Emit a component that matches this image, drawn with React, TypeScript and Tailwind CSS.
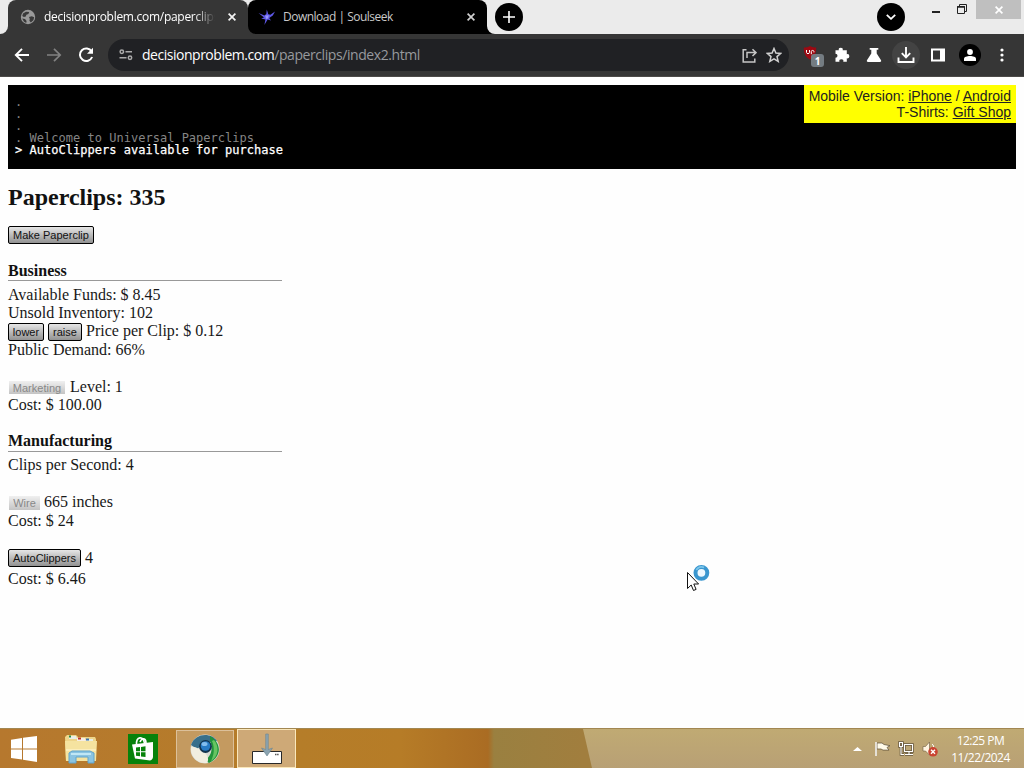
import React from "react";

const UI = "font-['Open_Sans','Noto_Sans',sans-serif]";
const ARIAL = "font-['Liberation_Sans',Arial,sans-serif]";

function Globe() {
  return (
    <svg className="h-4 w-4 shrink-0" viewBox="0 0 16 16">
      <circle cx="8" cy="8" r="7.2" fill="#9a9a9a" />
      <path d="M3 4.5 6 2.8l3.2.2-.8 2-2 .8-.6 1.7-2 .4-1.5-1zM9 8l2.8-.8 2.4 1-.8 3-2.6 2.4-1.4-1.8.4-1.8zM2.2 9.5 5 10l1.6 2-.4 2-2.4-1.5z" fill="#3a3a3a" />
    </svg>
  );
}

function Bird() {
  return (
    <svg className="h-[18px] w-[18px] shrink-0" viewBox="0 0 18 18">
      <path d="M.5 5 6.4 7.4 8.3 6 8.8 1.5 10.3 6.3 12.4 6.8 17 3.6 14.8 7.6 11.2 10 13 12.6 9.6 11.6 6.4 17 7.4 11.6 3.2 10.4 6 9.4z" fill="#5d57e6" />
      <path d="M7.2 7.4 10.8 7.2 10 10.6 8 11z" fill="#9896fa" />
    </svg>
  );
}

function Close({ color }: { color: string }) {
  return (
    <svg className="h-2 w-2 shrink-0" viewBox="0 0 8 8" stroke={color} strokeWidth="1.7">
      <path d="m.6.6 6.8 6.8M7.4.6.6 7.4" />
    </svg>
  );
}

function TabStrip() {
  return (
    <div className={`flex h-[34px] bg-[#ebebeb] text-xs ${UI}`}>
      <div className="w-2 bg-[#363636]">
        <div className="h-full w-full rounded-br-lg bg-[#ebebeb]" />
      </div>
      <div className="flex h-full w-60 items-center rounded-t-lg bg-[#363636] pl-3">
        <Globe />
        <div className="ml-2 w-[171px] overflow-hidden whitespace-nowrap tracking-[-0.28px] text-white [mask-image:linear-gradient(to_right,black_88%,transparent)]">
          decisionproblem.com/paperclips
        </div>
        <div className="ml-[13px]"><Close color="#f4f4f4" /></div>
      </div>
      <div className="w-[239px] bg-[#363636]">
        <div className="h-full bg-[linear-gradient(#ebebeb_0_8px,#363636_8px)]">
          <div className="flex h-full items-center rounded-lg rounded-br-none bg-black pl-[10px]">
            <Bird />
            <div className="ml-[7px] w-[176px] whitespace-nowrap tracking-[-0.5px] text-[#c9c9c9]">Download | Soulseek</div>
            <div className="ml-[8px]"><Close color="#d0d0d0" /></div>
          </div>
        </div>
      </div>
      <div className="w-2 bg-black">
        <div className="h-full rounded-bl-lg bg-[#ebebeb]" />
      </div>
      <div className="mt-[3px] flex h-7 w-7 items-center justify-center rounded-full bg-black">
        <svg className="h-3 w-3" viewBox="0 0 12 12" stroke="#fff" strokeWidth="1.6"><path d="M6 0v12M0 6h12" /></svg>
      </div>
      <div className="ml-auto mt-[3px] flex h-7 w-7 items-center justify-center rounded-full bg-black">
        <svg className="h-[6px] w-[10px]" viewBox="0 0 10 6" fill="none" stroke="#fff" strokeWidth="1.8"><path d="m.8.8 4.2 4 4.2-4" /></svg>
      </div>
      <div className="ml-[27px] mt-[11px] h-[2px] w-2 bg-[#222]" />
      <svg className="ml-[17px] mt-1 h-[10px] w-[10px]" viewBox="0 0 10 10" fill="none" stroke="#222">
        <path d="M2.5 2.5v-2h7v7h-2M.5 2.5h7v7h-7z" />
        <path d="M0 3h8" strokeWidth="1.5" />
      </svg>
      <div className="ml-[9px] mr-[3px] flex h-[19px] w-[45px] items-center justify-center bg-[#bfbfbf]">
        <Close color="#fff" />
      </div>
    </div>
  );
}

function Toolbar() {
  return (
    <div className={`flex h-[43px] items-center border-b border-[#4c4a48] bg-[#363636] ${UI}`}>
      <svg className="ml-[14px] h-4 w-4" viewBox="0 0 16 16" fill="none" stroke="#fff" strokeWidth="1.9"><path d="M15 8H2M8 1.8 1.8 8 8 14.2" /></svg>
      <svg className="ml-4 h-4 w-4" viewBox="0 0 16 16" fill="none" stroke="#828282" strokeWidth="1.7"><path d="M1 8h13M8 1.8 14.2 8 8 14.2" /></svg>
      <svg className="ml-4 h-4 w-4" viewBox="0 0 16 16">
        <path d="M13.6 4.4A6.3 6.3 0 1 0 14.1 10" fill="none" stroke="#fff" strokeWidth="2" />
        <path d="M15 .8v6H9z" fill="#fff" />
      </svg>
      <div className="ml-[14px] flex h-8 w-[681px] items-center rounded-full bg-[#202124]">
        <svg className="ml-[11px] h-3 w-[14px]" viewBox="0 0 14 12" fill="none" stroke="#aaa" strokeWidth="1.5">
          <circle cx="2.8" cy="2.7" r="1.7" /><path d="M6.5 2.7H13M.5 8.8h7" /><circle cx="11" cy="8.8" r="1.7" />
        </svg>
        <div className="ml-[9px] w-[600px] whitespace-nowrap text-sm">
          <span className="tracking-[-0.48px] text-white">decisionproblem.com</span>
          <span className="tracking-[-0.42px] text-[#97999d]">/paperclips/index2.html</span>
        </div>
        <svg className="h-[15px] w-[15px]" viewBox="0 0 15 15" fill="none" stroke="#c5c5c5" strokeWidth="1.5">
          <path d="M4.5 1.8H1.2V14h11.6v-3.5M5 10V4.6h8.5M10.5 1.2 14 4.6 10.5 8" />
        </svg>
        <svg className="ml-[9px] h-4 w-4" viewBox="0 0 16 16" fill="none" stroke="#d0d0d0" strokeWidth="1.5">
          <path d="m8 1.5 1.9 4.5 4.8.4-3.7 3.2 1.2 4.8L8 11.9l-4.2 2.5L5 9.6 1.3 6.4 6.1 6z" />
        </svg>
      </div>
      <div className="relative ml-[13px] h-5 w-[22px]">
        <svg className="h-4 w-4" viewBox="0 0 16 16"><path d="M8 1c2 1.3 4 1.5 6.2 1.5 0 5.5-1.3 9.3-6.2 12-4.9-2.7-6.2-6.5-6.2-12C4 2.5 6 2.3 8 1" fill="#9c0912" /><path d="M4.5 5v2.5c0 1.5 3 1.5 3 0V5M9.3 9.2V6.4c0-1.3 2.6-1.3 2.6 0v1" fill="none" stroke="#fff" strokeWidth="1" /></svg>
        <div className="absolute left-[9px] top-[9px] flex h-[13px] w-[13px] items-center justify-center rounded-[3px] bg-[#747c82] text-[10px] font-bold leading-none text-white">1</div>
      </div>
      <svg className="ml-[10px] h-4 w-4" viewBox="0 0 16 16"><path d="M1.5 3.2h3.3a2 2 0 1 1 3.9 0h4.1v4a2.1 2.1 0 1 1 0 4.1v3.5H9.3a2 2 0 1 0-3.9 0H1.5v-4a2 2 0 1 0 0-4z" fill="#fff" /></svg>
      <svg className="ml-4 h-4 w-4" viewBox="0 0 16 16"><path d="M3.7 1h8.6v1.7h-1.6v3.8l4.2 6.5c.7 1.1.1 2-1 2H2.1c-1.1 0-1.7-.9-1-2l4.2-6.5V2.7H3.7z" fill="#fff" /></svg>
      <div className="ml-[10px] flex h-7 w-7 items-center justify-center rounded-full bg-[#434343]">
        <svg className="h-[18px] w-[18px]" viewBox="0 0 18 18" fill="none" stroke="#fff" strokeWidth="1.9"><path d="M9 1v10M4.8 7.2 9 11.4l4.2-4.2M1.5 11.5V16h15v-4.5" /></svg>
      </div>
      <svg className="ml-[11px] h-[14px] w-[14px]" viewBox="0 0 14 14"><path d="M0 .5h14v13H0zm2 2v9h7v-9z" fillRule="evenodd" fill="#fff" /></svg>
      <div className="ml-[14px] flex h-[22px] w-[22px] items-center justify-center rounded-full bg-black">
        <svg className="h-3 w-3" viewBox="0 0 12 12" fill="#fff"><circle cx="6" cy="3" r="2.9" /><path d="M0 12V9.8C0 8 3 7 6 7s6 1 6 2.8V12z" /></svg>
      </div>
      <svg className="ml-[19px] h-[14px] w-1" viewBox="0 0 4 14" fill="#fff"><circle cx="2" cy="2" r="1.6" /><circle cx="2" cy="7" r="1.6" /><circle cx="2" cy="12" r="1.6" /></svg>
    </div>
  );
}

function GameButton({ children, className }: { children: string; className: string }) {
  return (
    <button className={`shrink-0 whitespace-nowrap rounded-[2px] border border-black bg-gradient-to-b from-[#e6e6e6] to-[#929292] text-center text-[11px] leading-[15px] text-[#111] ${ARIAL} ${className}`}>
      {children}
    </button>
  );
}

function DisabledButton({ children, className }: { children: string; className: string }) {
  return (
    <button disabled className={`ml-px shrink-0 whitespace-nowrap bg-gradient-to-b from-[#f0f0f0] to-[#c4c4c4] text-center text-[11px] text-[#888] ${ARIAL} ${className}`}>
      {children}
    </button>
  );
}

function ConsoleLog() {
  return (
    <div className="relative mx-2 mt-2 h-[84px] bg-black pl-[7px] pt-[11px] font-['DejaVu_Sans_Mono',monospace] text-xs leading-3 tracking-[0.02px] text-[#858585]">
      <div>.</div>
      <div>.</div>
      <div>.</div>
      <div>. Welcome to Universal Paperclips</div>
      <div className="text-white [-webkit-text-stroke:0.25px_white]">&gt; AutoClippers available for purchase</div>
      <div className={`absolute right-0 top-0 h-[38px] w-[212px] bg-[#ff0] pr-[5px] pt-[3px] text-right text-[14px] leading-4 tracking-normal text-[#222] ${ARIAL}`}>
        <div className="whitespace-nowrap">Mobile Version: <a className="underline">iPhone</a> / <a className="underline">Android</a></div>
        <div>T-Shirts: <a className="underline">Gift Shop</a></div>
      </div>
    </div>
  );
}

function Game() {
  return (
    <main className="flex h-[559px] flex-col items-start pl-2 text-base leading-[18px] text-[#181818]">
      <h1 className="mt-[14px] h-7 text-2xl font-bold leading-7 text-[#111]">Paperclips: 335</h1>
      <GameButton className="mt-[15px] h-[18px] w-[86px]">Make Paperclip</GameButton>

      <h2 className="mt-[18px] h-[19px] w-[274px] border-b border-[#999] text-[16px] font-bold leading-[18px] text-[#111]">Business</h2>
      <div className="mt-[5px]">Available Funds: $ 8.45</div>
      <div>Unsold Inventory: 102</div>
      <div className="flex h-[19px]">
        <GameButton className="mt-px h-[18px] w-9">lower</GameButton>
        <GameButton className="ml-1 mt-px h-[18px] w-[34px]">raise</GameButton>
        <span className="ml-1">Price per Clip: $ 0.12</span>
      </div>
      <div>Public Demand: 66%</div>
      <div className="mt-[19px] flex">
        <DisabledButton className="mt-[3px] h-[13px] w-14 leading-[12px]">Marketing</DisabledButton>
        <span className="ml-[5px]">Level: 1</span>
      </div>
      <div>Cost: $ 100.00</div>

      <h2 className="mt-[18px] h-5 w-[274px] border-b border-[#999] text-[16px] font-bold leading-[18px] text-[#111]">Manufacturing</h2>
      <div className="mt-1">Clips per Second: 4</div>
      <div className="mt-[19px] flex h-[19px]">
        <DisabledButton className="mt-[3px] h-[14px] w-[31px] leading-[13px]">Wire</DisabledButton>
        <span className="ml-1">665 inches</span>
      </div>
      <div>Cost: $ 24</div>
      <div className="mt-[19px] flex h-[21px]">
        <GameButton className="h-[18px] w-[73px]">AutoClippers</GameButton>
        <span className="ml-1">4</span>
      </div>
      <div>Cost: $ 6.46</div>
    </main>
  );
}

function Pointer() {
  return (
    <svg className="absolute left-[686px] top-[563px] h-[30px] w-[26px]" viewBox="0 0 26 30">
      <circle cx="15.4" cy="9.8" r="5.9" fill="#eef8ff" stroke="#3a96cf" strokeWidth="4" />
      <path d="M10.3 7a5.8 5.8 0 0 1 7.8-2.5" fill="none" stroke="#7cc6ea" strokeWidth="1.7" />
      <path d="M1.5 9.5v16l3.7-3.5 2.3 5.5 2.6-1.1L7.8 21h4.8z" fill="#fff" stroke="#111" strokeWidth="1" />
    </svg>
  );
}

function Taskbar() {
  return (
    <footer className="relative flex h-10 items-center border-t border-[#a28752] bg-[linear-gradient(to_right,#b6782e_0,#b57d29_300px,#b67c27_400px,#aa6c23_488px,#9a8040_494px,#a17e3e_583px,#a17e3e_100%)]">
      <div className="absolute inset-y-0 right-0 w-[441px] bg-gradient-to-b from-[#c0aa73] to-[#b8a075] [clip-path:polygon(0_0,100%_0,100%_100%,9px_100%)]" />
      <svg className="ml-[10px] h-[26px] w-7" viewBox="0 0 28 26" fill="#fff">
        <path d="M1 3.8 12 2v10.4H1zM13 1.8 27 0v12.4H13zM1 13.4h11v10.2L1 22zM13 13.4h14V26l-14-2.2z" />
      </svg>
      <svg className="ml-[26px] h-[30px] w-[34px]" viewBox="0 0 34 30">
        <path d="M1 3 3 1h9l2 2h17l1 2v22H2z" fill="#eed58a" />
        <path d="M5 2h7l1 3H5z" fill="#e9eee6" /><path d="M13 4h8l1 3h-9z" fill="#f6eee3" /><path d="M22 5h7v3h-7z" fill="#e7eee6" />
        <path d="M5 2.5h2" stroke="#298b45" strokeWidth="2" /><path d="M14 4.5h3" stroke="#bd352b" strokeWidth="2" /><path d="M22 5.5h3" stroke="#3e75ae" strokeWidth="2" />
        <path d="M1 7h32l-1 20H2z" fill="#f5e3a0" />
        <path d="M2 16h30" stroke="#fbeebb" strokeWidth="2" />
        <path d="M5 29V19l3-2h18l4 2v10h-6v-6H12v6z" fill="#8bc4e1" stroke="#5fa4cc" />
        <path d="M7 20h20" stroke="#c0e7f5" strokeWidth="2" />
      </svg>
      <svg className="ml-[30px] h-[30px] w-[30px]" viewBox="0 0 30 30">
        <path d="M0 0h30v30H0z" fill="#07820b" />
        <path d="M4 10.5 25 8v14.5c0 2-1 3.5-3 4L7 24.5z" fill="#fff" />
        <path d="M8.5 11c-.5-9 6.8-9.5 8-1.5M12 8c2-5 6-4 6 1" fill="none" stroke="#fff" strokeWidth="1.6" />
        <path d="m8 13.5 4-.5v4.2H8zm5-.6 4.5-.6v5H13zM8 18.2h4v4l-4-.5zm5 0h4.5v4.8l-4.5-.6z" fill="#07820b" />
      </svg>
      <div className="ml-[18px] flex h-[38px] w-[58px] items-center justify-center border border-[#dcc09a] bg-[#c49a60]">
        <svg className="h-[30px] w-[30px]" viewBox="0 0 30 30">
          <circle cx="15" cy="15" r="14.5" fill="#d8dbd3" />
          <path d="M1 11C5-1 21-2 27 7l-12 2-8 6z" fill="#386f8b" />
          <path d="M20 2c12 7 12 21-1 27l-4-3c7-4 8-13 5-19z" fill="#21943a" />
          <path d="M24 6c6 7 4 17-3 21 3-6 4-13 1-20z" fill="#67c462" />
          <path d="M1 13c4-1 10 3 14 6 3 3 4 7 2 10C8 30 0 23 1 13" fill="#f1eee0" />
          <circle cx="15.5" cy="12.5" r="6.4" fill="#12344f" />
          <circle cx="15.5" cy="12" r="4.8" fill="#277bc5" />
          <ellipse cx="14.5" cy="10" rx="3" ry="2" fill="#82bded" />
        </svg>
      </div>
      <div className="ml-[3px] flex h-[39px] w-[59px] items-center justify-center border border-[#fae7bb] bg-[#cea977]">
        <svg className="h-8 w-8" viewBox="0 0 32 32">
          <path d="M1.5 18.5h29v12h-29z" fill="#fff" stroke="#282828" />
          <path d="M24 21.5h4" stroke="#555" strokeWidth="1.5" strokeDasharray="1.5 .6" />
          <path d="M14.7 1h2.6v15.5l4.2-1.5-5.5 8-5.5-8 4.2 1.5z" fill="#8aa3b0" stroke="#6b848f" strokeWidth=".6" />
        </svg>
      </div>
      <div className="relative ml-auto flex items-center">
        <svg className="h-1 w-[9px]" viewBox="0 0 9 4"><path d="M0 4 4.5 0 9 4z" fill="#fff" /></svg>
        <svg className="ml-[13px] h-[15px] w-4" viewBox="0 0 16 15"><path d="M1 1v14M2 2h5l2 1.5 6 1.2-3 1.8 2 2.6H8L6 8H2z" fill="#fffbe9" stroke="#594c36" strokeWidth=".7" /><path d="M1 1v14" stroke="#fff" strokeWidth="1.5" /></svg>
        <svg className="ml-[7px] h-4 w-4" viewBox="0 0 16 16" fill="none"><path d="M6.5 3.5h8v7h-8zM7 13.5h8M11 11v3M1.5 1.5h3v4h-3zM3 6v7.5h3" stroke="#66573e" strokeWidth="2.6" /><path d="M6.5 3.5h8v7h-8zM7 13.5h8M11 11v3M1.5 1.5h3v4h-3zM3 6v7.5h3" stroke="#fff" strokeWidth="1.1" /></svg>
        <svg className="ml-2 h-4 w-4" viewBox="0 0 16 16"><path d="M1 5.5h2.5l4-4.5v13l-4-4H1z" fill="#fff4df" stroke="#6d5a40" strokeWidth=".6" /><path d="M10 3c1.5 1 2 3 1.5 4" fill="none" stroke="#fff" /><circle cx="11" cy="10.8" r="4.8" fill="#c94432" /><path d="m9 8.8 4 4M13 8.8l-4 4" stroke="#fff" strokeWidth="1.4" /></svg>
        <div className={`ml-[11px] mr-3 flex w-[63px] flex-col items-center whitespace-nowrap text-xs leading-[17px] tracking-[-0.5px] text-white ${UI}`}>
          <span>12:25 PM</span>
          <span>11/22/2024</span>
        </div>
      </div>
    </footer>
  );
}

export default function App() {
  return (
    <div className="relative h-[768px] w-[1024px] overflow-hidden bg-[#fefefe] font-['Liberation_Serif','Times_New_Roman',serif]">
      <TabStrip />
      <Toolbar />
      <ConsoleLog />
      <Game />
      <Taskbar />
      <Pointer />
    </div>
  );
}
